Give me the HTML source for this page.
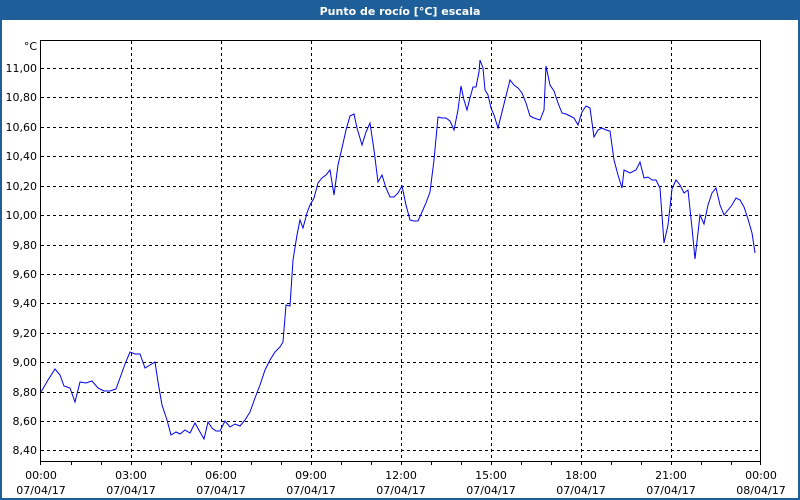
<!DOCTYPE html>
<html><head><meta charset="utf-8"><style>
body{margin:0;width:800px;height:500px;overflow:hidden;background:#fff;font-family:"DejaVu Sans","Liberation Sans",sans-serif;}
</style></head><body>
<svg width="800" height="500" xmlns="http://www.w3.org/2000/svg" style="display:block">
<rect x="0" y="0" width="800" height="500" fill="#1f5f99"/>
<rect x="2" y="20" width="796" height="478" fill="#fff"/>
<text x="400" y="15" fill="#fff" font-size="11" font-weight="bold" text-anchor="middle" font-family="DejaVu Sans, sans-serif">Punto de rocío [°C] escala</text>
<g stroke="#000" stroke-width="1" stroke-dasharray="3,3" fill="none">
<path d="M131.5 41V461M221.5 41V461M311.5 41V461M401.5 41V461M491.5 41V461M581.5 41V461M671.5 41V461"/>
<path d="M41 68.5H760M41 97.5H760M41 127.5H760M41 156.5H760M41 186.5H760M41 215.5H760M41 245.5H760M41 274.5H760M41 303.5H760M41 333.5H760M41 362.5H760M41 392.5H760M41 421.5H760M41 450.5H760"/>
</g>
<path d="M40.5 40.5H760.5V461.5H40.5Z" stroke="#000" fill="none"/>
<g stroke="#000"><path d="M71.5 461V465M101.5 461V465M131.5 461V465M161.5 461V465M191.5 461V465M221.5 461V465M251.5 461V465M281.5 461V465M311.5 461V465M341.5 461V465M371.5 461V465M401.5 461V465M431.5 461V465M461.5 461V465M491.5 461V465M521.5 461V465M551.5 461V465M581.5 461V465M611.5 461V465M641.5 461V465M671.5 461V465M701.5 461V465M731.5 461V465M760.5 461V465M40.5 461V465"/></g>
<polyline fill="none" stroke="#0000ee" stroke-width="1" points="41,392 48,380 55,369 60,375 64,386 70,388 75,402 80,382 86,383 92,381 98,388 104,391 110,391 116,389 120,378 125,364 130,352 135,354 140,354 145,368 150,365 155,362 158,382 162,405 167,420 171,435 176,432 180,434 185,430 190,433 195,423 200,432 204,439 208,422 212,428 216,431 220,431 225,421 230,427 235,424 240,426 245,420 250,412 255,398 260,385 265,370 270,360 275,352 280,347 283,342 286,305 290,306 293,260 297,235 300,220 303,228 307,213 310,205 314,198 318,183 322,178 326,175 330,170 334,195 338,165 342,148 346,130 350,116 354,114 357,128 362,145 366,132 370,123 374,150 378,182 382,175 386,188 390,197 394,197 398,193 402,186 406,205 410,220 414,221 418,221 422,212 426,203 430,192 434,160 438,117 442,118 446,118 450,121 454,130 458,110 461,86 464,100 467,110 470,98 473,87 476,87 479,72 480,60 483,68 485,90 488,95 491,108 494,115 498,128 502,112 506,96 510,80 514,85 518,88 522,93 526,103 530,116 534,118 540,120 544,110 546,66 550,85 554,91 558,103 562,113 566,114 570,116 574,118 578,125 582,112 586,106 590,108 594,137 598,130 602,128 606,130 610,131 614,160 618,175 622,188 624,170 630,173 636,170 640,162 644,178 648,177 652,180 656,180 660,188 664,243 668,225 672,189 676,180 680,185 684,193 688,190 692,228 695,259 700,215 704,224 708,205 712,193 716,188 720,205 724,215 728,210 732,205 736,198 740,200 744,207 748,219 752,233 755,253"/>
<g font-size="11" fill="#000" text-anchor="end" font-family="DejaVu Sans, sans-serif">
<text x="37" y="50">°C</text>
<text x="37" y="72">11,00</text><text x="37" y="101">10,80</text><text x="37" y="131">10,60</text><text x="37" y="160">10,40</text><text x="37" y="190">10,20</text><text x="37" y="219">10,00</text><text x="37" y="249">9,80</text><text x="37" y="278">9,60</text><text x="37" y="307">9,40</text><text x="37" y="337">9,20</text><text x="37" y="366">9,00</text><text x="37" y="396">8,80</text><text x="37" y="425">8,60</text><text x="37" y="454">8,40</text>
</g>
<g font-size="11" fill="#000" text-anchor="middle" font-family="DejaVu Sans, sans-serif">
<text x="41" y="479">00:00</text><text x="41" y="494">07/04/17</text>
<text x="131" y="479">03:00</text><text x="131" y="494">07/04/17</text>
<text x="221" y="479">06:00</text><text x="221" y="494">07/04/17</text>
<text x="311" y="479">09:00</text><text x="311" y="494">07/04/17</text>
<text x="401" y="479">12:00</text><text x="401" y="494">07/04/17</text>
<text x="491" y="479">15:00</text><text x="491" y="494">07/04/17</text>
<text x="581" y="479">18:00</text><text x="581" y="494">07/04/17</text>
<text x="671" y="479">21:00</text><text x="671" y="494">07/04/17</text>
<text x="761" y="479">00:00</text><text x="761" y="494">08/04/17</text>
</g>
</svg>
</body></html>
